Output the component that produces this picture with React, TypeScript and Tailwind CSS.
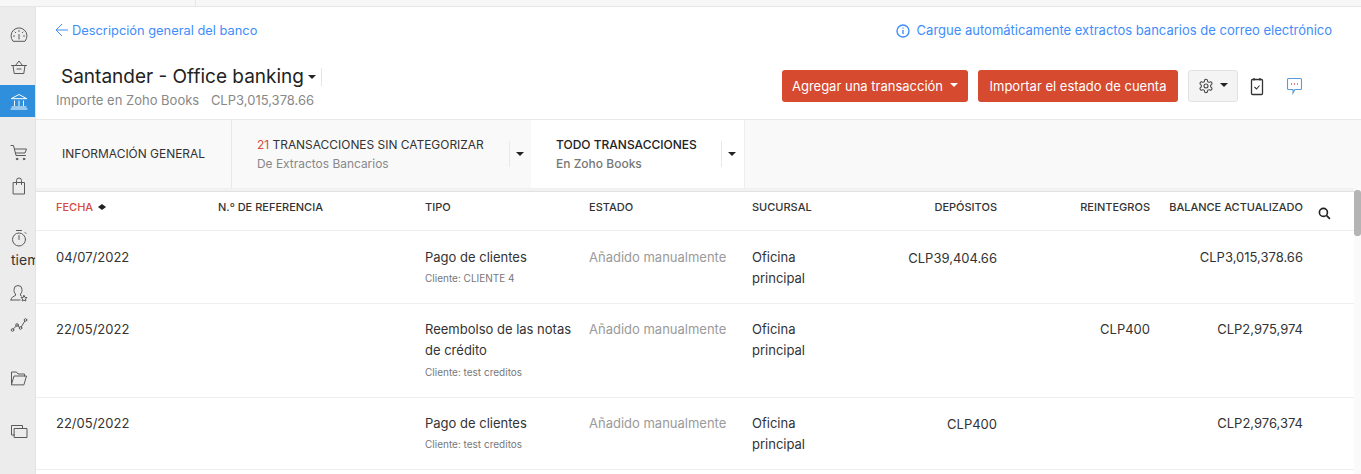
const S = "none";

function Caret({ className = "" }: { className?: string }) {
  return <span className={`inline-block w-0 h-0 border-x-[4px] border-x-transparent border-t-[4px] ${className}`} />;
}

function Ico({ children, color = "#555", w = 18 }: { children: React.ReactNode; color?: string; w?: number }) {
  return (
    <svg width={w} height={w} viewBox="0 0 18 18" fill={S} stroke={color} strokeWidth="1" strokeLinecap="round" strokeLinejoin="round">
      {children}
    </svg>
  );
}

function SideItem({ h, children, active = false }: { h: string; children: React.ReactNode; active?: boolean }) {
  return <div className={`${h} flex items-center pl-[10px] ${active ? "bg-[#2f8fdd] w-[35px]" : ""}`}>{children}</div>;
}

function Sidebar() {
  return (
    <aside className="w-[36px] shrink-0 bg-[#ececec] border-r border-[#e2e2e2] overflow-hidden">
      <div className="h-[12px]" />
      <SideItem h="h-[32px]">
        <Ico color="#5a5a5a">
          <path d="M2.800 15a8 8 0 1 1 12.400 0z" />
          <path d="M9 4.500v1M5 6l.7.7M13 6l-.7.7M3.500 10h1M13.500 10h1M9 13V8.500" />
        </Ico>
      </SideItem>
      <SideItem h="h-[32px]">
        <Ico color="#5a5a5a">
          <path d="M1.500 7.500h15M3 7.500l1.200 8h9.600l1.200-8M5.500 7.500L9 3l3.500 4.500M7 11h4" />
        </Ico>
      </SideItem>
      <div className="h-[2px]" />
      <SideItem h="h-[32px]" active>
        <Ico color="#ffffff">
          <path d="M1.500 6.500L9 2.500l7.500 4zM4.500 9v4.500M9 9v4.500M13.500 9v4.500M2 15h14M1 17h16" />
        </Ico>
      </SideItem>
      <div className="h-[19px]" />
      <SideItem h="h-[34px]">
        <Ico color="#5a5a5a">
          <path d="M1 1.500h2.500L6 11.500h9.500M4.500 5h12l-1.500 4H5.500" />
          <circle cx="7" cy="15" r="0.8" fill="#5a5a5a" />
          <circle cx="14" cy="15" r="0.8" fill="#5a5a5a" />
        </Ico>
      </SideItem>
      <SideItem h="h-[32px]">
        <Ico color="#5a5a5a">
          <path d="M3.500 5.500h11v11.500h-11zM6.500 7.500V3.500a2.500 2.500 0 0 1 5 0v4" />
        </Ico>
      </SideItem>
      <div className="h-[26px]" />
      <SideItem h="h-[20px]">
        <Ico color="#5a5a5a">
          <circle cx="9" cy="10.500" r="6.500" />
          <path d="M6.500 1.500h5M9 10.500V6.500M15 3.500l1 1" />
        </Ico>
      </SideItem>
      <div className="h-[22px] pl-[11px] flex items-center whitespace-nowrap text-[14px] text-[#333]">tiempo</div>
      <div className="h-[1px]" />
      <SideItem h="h-[43px]">
        <Ico color="#5a5a5a">
          <path d="M1 16c0-3 2.500-3.500 4.500-4.500v-1.500C4 8.500 4 7 4 5.500a4 4 0 0 1 8 0c0 1.500 0 3-1.500 4.500v1.500l1 .5M1 16h9" />
          <path d="M14 11.500l.9 1.800 2 .3-1.400 1.400.3 2-1.800-.9-1.800.9.3-2-1.400-1.400 2-.3z" />
        </Ico>
      </SideItem>
      <SideItem h="h-[21px]">
        <Ico color="#5a5a5a">
          <circle cx="2.500" cy="14" r="1.300" />
          <circle cx="7" cy="9" r="1.300" />
          <circle cx="10.500" cy="12" r="1.300" />
          <circle cx="15.500" cy="4" r="1.300" />
          <path d="M3.300 13l2.900-3M8 10l1.500 1.200M11.200 11l3.600-5.900" />
        </Ico>
      </SideItem>
      <div className="h-[32px]" />
      <SideItem h="h-[21px]">
        <Ico color="#5a5a5a">
          <path d="M1.500 15.500V3h5l1.500 2h6.500v2M1.500 15.500L4 7h12.500l-2.500 8.500z" />
        </Ico>
      </SideItem>
      <div className="h-[32px]" />
      <SideItem h="h-[21px]">
        <Ico color="#5a5a5a">
          <path d="M4.500 13H1.500V3.500h11v3" />
          <path d="M4.500 6.500h12.500v9H4.500z" />
        </Ico>
      </SideItem>
    </aside>
  );
}

const cols = "grid grid-cols-[162px_207px_164px_163px_100px_145px_153px_153px_1fr]";

function Row({ h, pt, subMt, date, tipo, sub, dep, rei, bal }: { h: string; pt: string; subMt: string; date: string; tipo: string; sub: string; dep?: string; rei?: string; bal: string }) {
  return (
    <div className={`${cols} ${h} ${pt} pl-[20px] border-b border-[#eeeeee] text-[13px] leading-[21px] text-[#333]`}>
      <div>{date}</div>
      <div />
      <div>
        <div className="w-[150px]">{tipo}</div>
        <div className={`text-[10px] leading-[14px] ${subMt} text-[#777]`}>{sub}</div>
      </div>
      <div className="text-[#9a9a9a]">Añadido manualmente</div>
      <div>Oficina<br />principal</div>
      <div className="text-right pt-[1px]">{dep}</div>
      <div className="text-right">{rei}</div>
      <div className="text-right">{bal}</div>
    </div>
  );
}

export default function App() {
  return (
    <div className="w-[1361px] h-[474px] overflow-hidden bg-white flex flex-col font-['Inter',sans-serif]">
      <div className="h-[7px] shrink-0 bg-[#f7f7f7] border-b border-[#e6e6e6] flex">
        <div className="w-[196px] border-r border-[#e6e6e6]" />
      </div>
      <div className="flex flex-1 min-h-0">
        <Sidebar />
        <main className="flex-1 min-w-0 flex flex-col">
          <div className="h-[47px] shrink-0 flex items-center justify-between pl-[19px] pr-[29px] text-[13px] text-[#408dfb]">
            <div className="flex items-center gap-[3px]">
              <svg width="14" height="14" viewBox="0 0 14 14" fill="none" stroke="#408dfb" strokeWidth="1">
                <path d="M13 7H1.500M7 1L1 7l6 6" />
              </svg>
              <span className="text-[12.850px]">Descripción general del banco</span>
            </div>
            <div className="flex items-center gap-[7px]">
              <svg width="14" height="14" viewBox="0 0 14 14" fill="none" stroke="#408dfb" strokeWidth="1.400">
                <circle cx="7" cy="7" r="6" />
                <path d="M7 6v4M7 3.500v1" />
              </svg>
              <span>Cargue automáticamente extractos bancarios de correo electrónico</span>
            </div>
          </div>
          <div className="h-[66px] shrink-0 flex justify-between border-b border-[#e8e8e8]">
            <div className="pl-[20px] pt-[10px]">
              <div className="flex items-center pl-[5px] h-[26px] text-[19px] text-[#222]">
                <span>Santander - Office banking</span>
                <Caret className="border-t-[#222] ml-[4px]" />
                <span className="w-px h-[18px] bg-[#e5e5e5] ml-[5px]" />
              </div>
              <div className="text-[13px] leading-[18px] mt-[1px] text-[#888]">
                Importe en Zoho Books <span className="ml-[8px]">CLP3,015,378.66</span>
              </div>
            </div>
            <div className="flex items-start pt-[16px] pr-[58px]">
              <button className="h-[32px] w-[186px] shrink-0 pt-[1px] rounded-[3px] bg-[#d64a30] text-white text-[13px] flex items-center justify-center gap-[7px] whitespace-nowrap">
                Agregar una transacción <Caret className="border-t-white -mt-[3px]" />
              </button>
              <button className="h-[32px] w-[200px] shrink-0 pt-[1px] ml-[10px] rounded-[3px] bg-[#d64a30] text-white text-[13px] whitespace-nowrap">
                Importar el estado de cuenta
              </button>
              <button className="h-[32px] w-[50px] shrink-0 ml-[10px] rounded-[3px] bg-[#f4f4f4] border border-[#e2e2e2] flex items-center justify-center gap-[6px]">
                <svg width="16" height="16" viewBox="0 0 24 24" fill="none" stroke="#444" strokeWidth="1.600" strokeLinecap="round" strokeLinejoin="round">
                  <path d="M12.220 2h-.440a2 2 0 0 0-2 2v.180a2 2 0 0 1-1 1.730l-.430.250a2 2 0 0 1-2 0l-.150-.080a2 2 0 0 0-2.730.730l-.220.380a2 2 0 0 0 .730 2.730l.150.100a2 2 0 0 1 1 1.720v.510a2 2 0 0 1-1 1.740l-.150.090a2 2 0 0 0-.730 2.730l.220.380a2 2 0 0 0 2.730.730l.150-.080a2 2 0 0 1 2 0l.430.250a2 2 0 0 1 1 1.730V20a2 2 0 0 0 2 2h.440a2 2 0 0 0 2-2v-.180a2 2 0 0 1 1-1.730l.430-.250a2 2 0 0 1 2 0l.150.080a2 2 0 0 0 2.730-.730l.220-.390a2 2 0 0 0-.730-2.730l-.150-.080a2 2 0 0 1-1-1.740v-.500a2 2 0 0 1 1-1.740l.150-.090a2 2 0 0 0 .730-2.730l-.220-.380a2 2 0 0 0-2.730-.730l-.150.080a2 2 0 0 1-2 0l-.430-.250a2 2 0 0 1-1-1.730V4a2 2 0 0 0-2-2z" />
                  <circle cx="12" cy="12" r="3" />
                </svg>
                <Caret className="border-t-[#222] -mt-[3px]" />
              </button>
              <div className="h-[32px] ml-[12px] flex items-center">
                <svg width="14" height="19" viewBox="0 0 14 19" fill="none" stroke="#333" strokeWidth="1.300">
                  <rect x="1.500" y="2.500" width="11" height="15" rx="1" />
                  <path d="M4 1v2.500M10 1v2.500" />
                  <path d="M4.500 10l2 2 3-3.500" strokeWidth="1.100" />
                </svg>
              </div>
              <div className="h-[32px] ml-[22px] flex items-center">
                <svg width="17" height="18" viewBox="0 0 17 18" fill="none" stroke="#5b9bd5" strokeWidth="1.100">
                  <path d="M2.500 1.500h12a1 1 0 0 1 1 1v9a1 1 0 0 1-1 1H9L7 16v-3.500H2.500a1 1 0 0 1-1-1v-9a1 1 0 0 1 1-1z" />
                  <path d="M5 7h1M8 7h1M11 7h1" stroke="#e0584a" strokeWidth="1.300" />
                </svg>
              </div>
            </div>
          </div>
          <div className="h-[68px] shrink-0 flex bg-[#f9f9f9] text-[11.950px]">
            <div className="w-[196px] border-r border-[#e8e8e8] pl-[26px] flex items-center text-[#333]">INFORMACIÓN GENERAL</div>
            <div className="w-[299px] pl-[25px] pr-[7px] flex items-center">
              <div className="flex-1 whitespace-nowrap">
                <div className="leading-[20px] text-[#333]"><span className="text-[#d64a40]">21</span> TRANSACCIONES SIN CATEGORIZAR</div>
                <div className="leading-[18px] text-[#888]">De Extractos Bancarios</div>
              </div>
              <span className="w-px h-[26px] bg-[#e8e8e8] mr-[6px]" />
              <Caret className="border-t-[#222]" />
            </div>
            <div className="w-[214px] bg-white border-r border-[#eeeeee] pl-[25px] pr-[8px] flex items-center font-medium text-[12px]">
              <div className="flex-1 whitespace-nowrap">
                <div className="leading-[20px] text-[#222]">TODO TRANSACCIONES</div>
                <div className="leading-[18px] text-[#777]">En Zoho Books</div>
              </div>
              <span className="w-px h-[26px] bg-[#e8e8e8] mr-[6px]" />
              <Caret className="border-t-[#222]" />
            </div>
          </div>
          <div className="relative flex-1 min-h-0 overflow-hidden">
            <div className="h-[4px] bg-[#f1f1f1] border-b border-[#e2e2e2]" />
            <div className={`${cols} h-[39px] pl-[20px] pt-[8px] border-b border-[#eeeeee] text-[11px] leading-[14px] font-medium text-[#333]`}>
              <div className="flex items-start text-[#d64a40]">
                FECHA
                <span className="ml-[5px] mt-[4px] flex flex-col">
                  <span className="w-0 h-0 border-x-[4px] border-x-transparent border-b-[3px] border-b-[#222]" />
                  <span className="w-0 h-0 border-x-[4px] border-x-transparent border-t-[3px] border-t-[#222]" />
                </span>
              </div>
              <div>N.º DE REFERENCIA</div>
              <div>TIPO</div>
              <div>ESTADO</div>
              <div>SUCURSAL</div>
              <div className="text-right">DEPÓSITOS</div>
              <div className="text-right">REINTEGROS</div>
              <div className="text-right whitespace-nowrap">BALANCE ACTUALIZADO</div>
              <div className="pl-[15px] pt-[7px]">
                <svg width="13" height="13" viewBox="0 0 12 12" fill="none" stroke="#222" strokeWidth="1.500">
                  <circle cx="5" cy="5" r="3.700" />
                  <path d="M8 8l3 3" />
                </svg>
              </div>
            </div>
            <Row h="h-[73px]" pt="pt-[16px]" subMt="mt-[3px]" date="04/07/2022" tipo="Pago de clientes" sub="Cliente: CLIENTE 4" dep="CLP39,404.66" bal="CLP3,015,378.66" />
            <Row h="h-[94px]" pt="pt-[15px]" subMt="mt-[4px]" date="22/05/2022" tipo="Reembolso de las notas de crédito" sub="Cliente: test creditos" rei="CLP400" bal="CLP2,975,974" />
            <Row h="h-[72px]" pt="pt-[15px]" subMt="mt-[3px]" date="22/05/2022" tipo="Pago de clientes" sub="Cliente: test creditos" dep="CLP400" bal="CLP2,976,374" />
            <div className="absolute right-0 top-0 bottom-0 w-[7px] pt-[2px] bg-[#fafafa]">
              <div className="h-[46px] rounded-[3px] bg-[#b4b4b4]" />
            </div>
          </div>
        </main>
      </div>
    </div>
  );
}
